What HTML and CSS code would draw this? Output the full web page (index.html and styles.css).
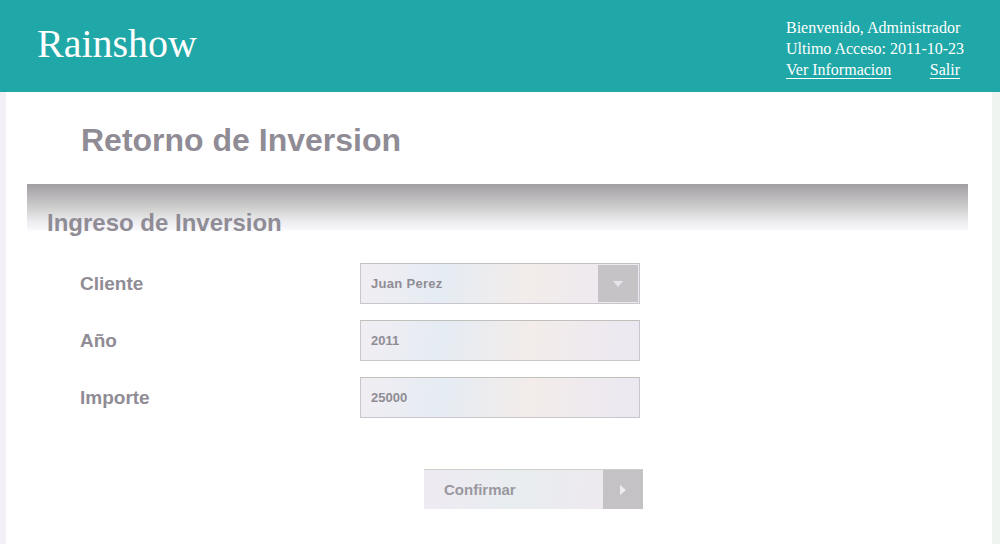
FILE: index.html
```html
<!DOCTYPE html>
<html>
<head>
<meta charset="utf-8">
<link rel="stylesheet" href="styles.css">
</head>
<body>
<header class="top">
  <div class="brand">Rainshow</div>
  <div class="user">
    <div>Bienvenido, Administrador</div>
    <div>Ultimo Acceso: 2011-10-23</div>
    <div class="links"><a href="#">Ver Informacion</a><a href="#">Salir</a></div>
  </div>
</header>
<main class="page">
  <h1 class="title">Retorno de Inversion</h1>
  <section class="panel">
    <h2 class="panel-head">Ingreso de Inversion</h2>
    <form class="form">
      <div class="row">
        <label class="lbl">Cliente</label>
        <div class="field select"><span class="val bold">Juan Perez</span><span class="drop"><svg width="12" height="8" viewBox="0 0 12 8"><path d="M1 1h10L6 7z" fill="#e4e4ea"/></svg></span></div>
      </div>
      <div class="row">
        <label class="lbl">Año</label>
        <div class="field"><span class="val">2011</span></div>
      </div>
      <div class="row">
        <label class="lbl">Importe</label>
        <div class="field"><span class="val">25000</span></div>
      </div>
      <div class="actions">
        <button type="button" class="btn"><span class="btn-text">Confirmar</span><span class="btn-arrow"><svg width="8" height="12" viewBox="0 0 8 12"><path d="M1 1l6 5-6 5z" fill="#ececf2"/></svg></span></button>
      </div>
    </form>
  </section>
</main>
</body>
</html>
```
FILE: styles.css
```css
html, body { margin: 0; padding: 0; }
body {
  width: 1000px;
  height: 544px;
  overflow: hidden;
  background: #fff;
  font-family: "Liberation Sans", Arial, sans-serif;
  color: #908c95;
}
.top {
  height: 92px;
  background: #20a7a7;
  display: flex;
  justify-content: space-between;
  color: #fff;
  font-family: "Liberation Serif", "Times New Roman", serif;
}
.brand {
  font-size: 40px;
  padding: 21px 0 0 37px;
  line-height: 46px;
}
.user {
  padding: 17px 40px 0 0;
  width: 174px;
  font-size: 16px;
  line-height: 21px;
  white-space: nowrap;
}
.links { display: flex; justify-content: space-between; }
.links a { color: #fff; text-decoration: underline; text-underline-offset: 3px; }
.page {
  height: 452px;
  border-left: 6px solid #f3eff6;
  border-right: 8px solid #eff4f1;
  box-sizing: border-box;
  width: 1000px;
}
.title {
  margin: 0;
  padding: 30px 0 0 75px;
  font-size: 32px;
  line-height: 36px;
  font-weight: bold;
  height: 62px;
}
.panel { margin-left: 21px; width: 941px; }
.panel-head {
  margin: 0;
  height: 47px;
  background: linear-gradient(#a29fa3 0%, #bcbabd 30%, #d3d4d1 55%, #ececf1 80%, #fbfbfd 100%);
  font-size: 24px;
  line-height: 26px;
  padding: 26px 0 0 20px;
  box-sizing: border-box;
  font-weight: bold;
}
.form { padding-top: 32px; }
.row {
  display: flex;
  align-items: center;
  height: 41px;
  margin-bottom: 16px;
}
.lbl {
  width: 333px;
  padding-left: 53px;
  font-size: 19px;
  font-weight: bold;
  box-sizing: border-box;
}
.field {
  width: 280px;
  height: 41px;
  box-sizing: border-box;
  border: 1px solid #c9c6cc;
  border-top-color: #c0c0bc;
  background: linear-gradient(100deg, #f1eef3 0%, #e5ecf3 30%, #f3ecea 60%, #ebe8f2 100%);
  display: flex;
  align-items: center;
}
.val { padding-left: 10px; font-size: 13px; font-weight: bold; flex: 1; }
.val.bold { letter-spacing: 0.3px; }
.drop {
  width: 40px;
  height: 37px;
  margin-right: 1px;
  background: #c6c3c6;
  display: flex;
  align-items: center;
  justify-content: center;
}
.actions { padding: 35px 0 0 397px; }
.btn {
  display: flex;
  align-items: stretch;
  height: 40px;
  width: 219px;
  padding: 0;
  border: 0;
  border-top: 1px solid #cfcfcc;
  background: linear-gradient(100deg, #efeaf2 0%, #e8edf0 40%, #f0e8ee 100%);
  font-family: "Liberation Sans", Arial, sans-serif;
  cursor: pointer;
}
.btn-text {
  flex: 1;
  display: flex;
  align-items: center;
  padding-left: 20px;
  font-size: 15px;
  font-weight: bold;
  color: #9a979e;
}
.btn-arrow {
  width: 40px;
  background: #c4c2c5;
  display: flex;
  align-items: center;
  justify-content: center;
}
```
